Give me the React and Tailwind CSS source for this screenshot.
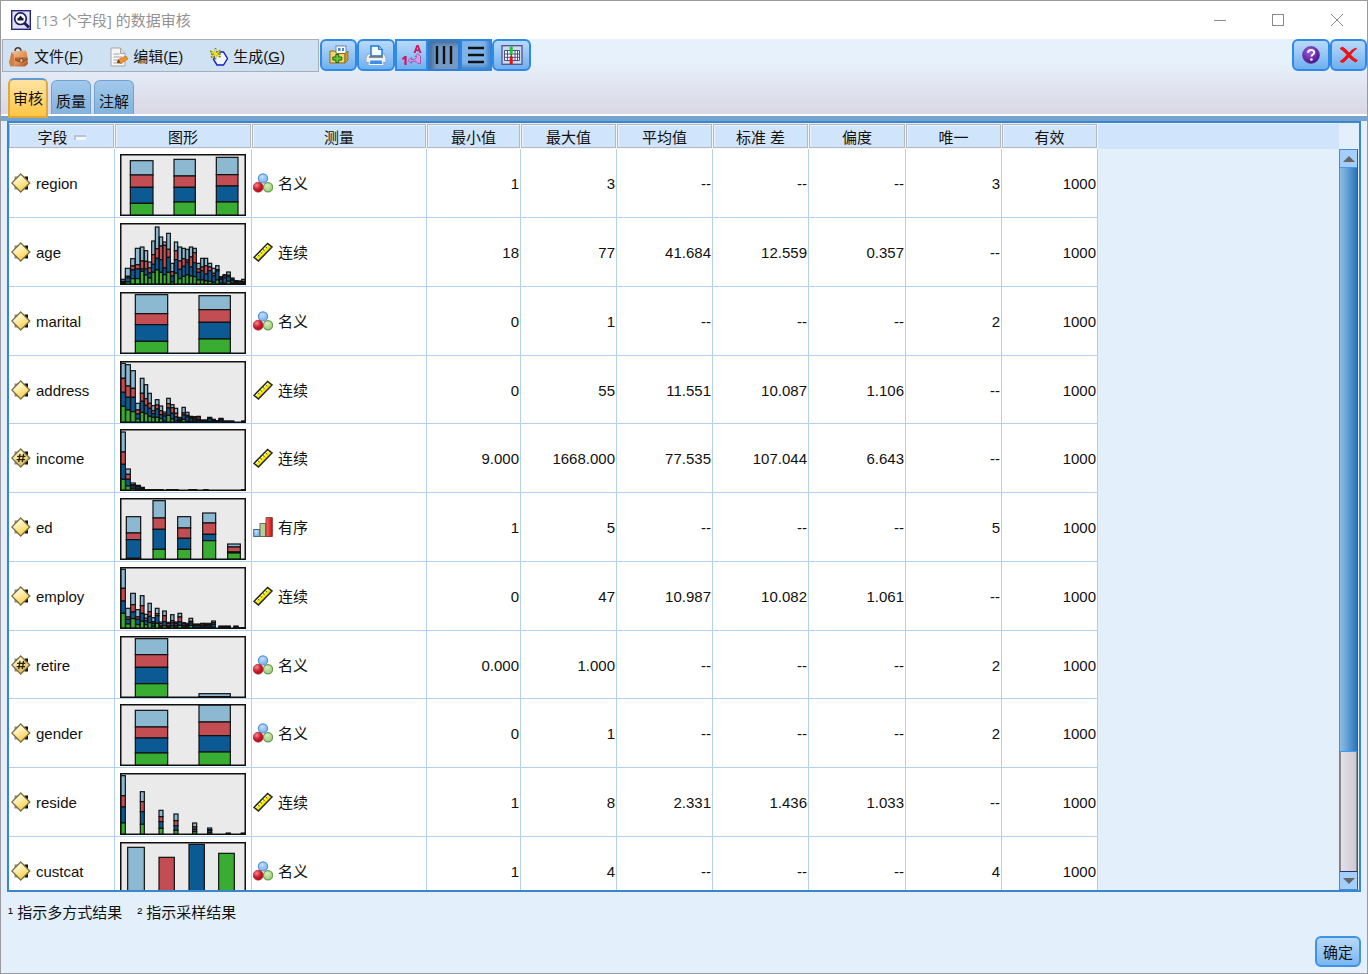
import React from "react";

const BLUE = "#8db8d2";
const RED = "#c24d52";
const NAVY = "#0c5a94";
const GREEN = "#39ad32";
const STACK = [BLUE, RED, NAVY, GREEN];

/* Each bar: [left, right, top, red start, navy start, green start].
   `origin` is the top-left corner of the plot, `size` is always 378 x 186. */
const CHARTS = {
  region: {
    origin: [360, 117],
    bars: [
      [391, 459, 137, 180, 217, 265],
      [522, 586, 133, 183, 217, 261],
      [649, 714, 127, 179, 213, 261],
    ],
  },
  age: {
    origin: [15, 15],
    bars: [
      [18, 31, 184, 190, 193, 196],
      [31, 46, 151, 175, 180, 192],
      [47, 60, 122, 144, 156, 182],
      [61, 75, 91, 140, 153, 182],
      [76, 87, 87, 129, 153, 160],
      [88, 98, 98, 130, 153, 171],
      [99, 109, 132, 150, 165, 180],
      [110, 120, 69, 110, 139, 163],
      [121, 132, 27, 92, 121, 156],
      [133, 143, 57, 84, 125, 163],
      [144, 154, 72, 82, 150, 170],
      [155, 166, 46, 94, 118, 163],
      [167, 177, 136, 161, 174, 192],
      [178, 188, 72, 98, 125, 166],
      [189, 200, 87, 129, 154, 182],
      [201, 211, 91, 122, 145, 175],
      [212, 222, 94, 126, 133, 171],
      [223, 233, 87, 117, 147, 174],
      [234, 244, 91, 104, 134, 176],
      [245, 256, 136, 153, 163, 186],
      [257, 267, 121, 147, 158, 186],
      [268, 278, 121, 143, 168, 189],
      [279, 290, 136, 147, 158, 190],
      [291, 301, 151, 166, 173, 193],
      [302, 312, 143, 155, 159, 186],
      [313, 323, 176, 180, 184, 196],
      [324, 335, 170, 174, 180, 196],
      [335, 346, 162, 172, 176, 190],
      [347, 357, 180, 184, 187, 196],
      [358, 368, 188, 190, 193, 196],
      [369, 380, 189, 190, 195, 197],
      [380, 391, 184, 190, 194, 197],
    ],
  },
  marital: {
    origin: [360, 20],
    bars: [
      [406, 503, 28, 85, 118, 168],
      [597, 691, 31, 73, 111, 161],
    ],
  },
  address: {
    origin: [15, 15],
    bars: [
      [17, 31, 22, 67, 109, 151],
      [32, 46, 26, 90, 124, 162],
      [47, 61, 44, 97, 124, 167],
      [62, 75, 142, 162, 174, 189],
      [76, 87, 67, 112, 136, 169],
      [88, 98, 86, 128, 148, 173],
      [99, 109, 112, 142, 157, 181],
      [110, 120, 149, 164, 173, 184],
      [121, 132, 131, 147, 159, 184],
      [133, 143, 150, 164, 176, 188],
      [144, 154, 168, 174, 180, 196],
      [155, 166, 127, 143, 156, 178],
      [167, 177, 146, 155, 172, 189],
      [178, 188, 157, 172, 183, 194],
      [189, 200, 184, 189, 192, 196],
      [201, 211, 154, 171, 177, 190],
      [212, 222, 169, 178, 183, 196],
      [223, 233, 181, 184, 188, 196],
      [234, 244, 182, 184, 189, 195],
      [245, 256, 181, 183, 190, 195],
      [257, 278, 192, 193, 194, 196],
      [278, 290, 184, 186, 188, 196],
      [291, 301, 190, 191, 193, 196],
      [302, 312, 194, 195, 196, 198],
      [312, 324, 187, 189, 191, 196],
      [325, 356, 195, 196, 197, 198],
      [380, 391, 195, 196, 197, 198],
    ],
  },
  income: {
    origin: [360, 433],
    bars: [
      [362, 376, 442, 502, 539, 584],
      [377, 391, 553, 569, 584, 604],
      [392, 406, 595, 600, 604, 611],
      [407, 421, 602, 604, 607, 613],
      [422, 433, 608, 610, 612, 614],
      [434, 489, 615, 616, 616, 617],
      [500, 534, 615, 616, 616, 617],
      [567, 590, 615, 616, 616, 617],
      [612, 624, 615, 616, 616, 617],
      [725, 737, 615, 616, 616, 617],
    ],
  },
  ed: {
    origin: [360, 25],
    bars: [
      [379, 422, 81, 130, 150, 206],
      [459, 496, 33, 85, 119, 179],
      [533, 572, 81, 115, 146, 179],
      [608, 647, 70, 100, 134, 153],
      [683, 721, 163, 172, 187, 190],
    ],
  },
  employ: {
    origin: [15, 15],
    bars: [
      [17, 31, 22, 79, 117, 154],
      [32, 46, 139, 165, 172, 186],
      [47, 61, 94, 128, 150, 170],
      [62, 75, 143, 165, 172, 188],
      [76, 87, 101, 131, 154, 178],
      [88, 98, 157, 169, 176, 188],
      [99, 109, 124, 149, 163, 182],
      [110, 120, 167, 179, 184, 193],
      [121, 132, 139, 155, 161, 184],
      [133, 143, 180, 185, 192, 196],
      [143, 154, 147, 161, 179, 191],
      [155, 166, 181, 185, 192, 196],
      [167, 177, 158, 176, 182, 192],
      [178, 188, 180, 184, 190, 196],
      [189, 200, 154, 165, 180, 190],
      [201, 211, 182, 186, 191, 196],
      [212, 222, 184, 188, 192, 196],
      [222, 233, 169, 178, 183, 190],
      [234, 256, 186, 188, 190, 196],
      [257, 267, 184, 186, 191, 196],
      [268, 288, 184, 188, 191, 196],
      [290, 301, 177, 182, 187, 196],
      [312, 346, 192, 194, 196, 198],
      [357, 369, 192, 194, 196, 198],
      [370, 391, 197, 198, 198, 199],
    ],
  },
  retire: {
    origin: [360, 437],
    bars: [
      [406, 503, 445, 493, 531, 580],
      [597, 691, 610, 619, 620, 621],
    ],
  },
  gender: {
    origin: [360, 28],
    bars: [
      [406, 503, 47, 97, 130, 175],
      [597, 691, 31, 82, 123, 172],
    ],
  },
  reside: {
    origin: [360, 235],
    bars: [
      [362, 376, 243, 303, 337, 385],
      [421, 433, 291, 321, 351, 389],
      [477, 489, 347, 366, 381, 401],
      [522, 534, 358, 378, 393, 407],
      [578, 590, 385, 397, 404, 411],
      [623, 635, 400, 405, 408, 414],
      [679, 691, 415, 417, 418, 419],
      [724, 737, 415, 417, 418, 419],
    ],
  },
  custcat: {
    origin: [360, 441],
    solid: [
      [383, 433, 457, BLUE],
      [477, 523, 487, RED],
      [567, 613, 448, NAVY],
      [656, 703, 475, GREEN],
    ],
  },
};

function Chart({ name }) {
  const { origin, bars = [], solid = [] } = CHARTS[name];
  const [ox, oy] = origin;
  const bottom = 184;
  return (
    <svg className="block h-[62px] w-[126px]" viewBox="0 0 378 186" role="img" aria-label={name}>
      <rect x="1.5" y="1.5" width="375" height="183" fill="#eaeaea" />
      <g stroke="#111" strokeWidth="3.6">
        {bars.map((b, i) =>
          STACK.map((fill, k) => {
            const top = b[k + 2] - oy;
            const end = k < 3 ? b[k + 3] - oy : bottom;
            return (
              <rect key={`${i}-${k}`} x={b[0] - ox} y={top} width={b[1] - b[0]} height={Math.max(0, end - top)} fill={fill} />
            );
          })
        )}
        {solid.map((b, i) => (
          <rect key={i} x={b[0] - ox} y={b[2] - oy} width={b[1] - b[0]} height={bottom - b[2] + oy} fill={b[3]} />
        ))}
        <rect x="1.5" y="1.5" width="375" height="183" fill="none" strokeWidth="6" />
      </g>
    </svg>
  );
}

const ROWS = [
  ["region", "nominal", "1", "3", "--", "--", "--", "3", "1000"],
  ["age", "scale", "18", "77", "41.684", "12.559", "0.357", "--", "1000"],
  ["marital", "nominal", "0", "1", "--", "--", "--", "2", "1000"],
  ["address", "scale", "0", "55", "11.551", "10.087", "1.106", "--", "1000"],
  ["income", "scale", "9.000", "1668.000", "77.535", "107.044", "6.643", "--", "1000"],
  ["ed", "ordinal", "1", "5", "--", "--", "--", "5", "1000"],
  ["employ", "scale", "0", "47", "10.987", "10.082", "1.061", "--", "1000"],
  ["retire", "nominal", "0.000", "1.000", "--", "--", "--", "2", "1000"],
  ["gender", "nominal", "0", "1", "--", "--", "--", "2", "1000"],
  ["reside", "scale", "1", "8", "2.331", "1.436", "1.033", "--", "1000"],
  ["custcat", "nominal", "1", "4", "--", "--", "--", "4", "1000"],
];
const REAL_FIELDS = ["income", "retire"];
const HEADERS = ["字段", "图形", "测量", "最小值", "最大值", "平均值", "标准 差", "偏度", "唯一", "有效"];
const MEASURE = { nominal: "名义", scale: "连续", ordinal: "有序" };

function FieldIcon({ real }) {
  return (
    <svg className="size-5 shrink-0" viewBox="0 0 20 20" aria-hidden="true">
      <path d="M3.500 3.500h4v3.500h-4zM3.500 13h4v3.500h-4z" fill="#8b8b8b" />
      <path d="M13.500 3.500h3.500v3.500h-3.500zM13.500 13h3.500v3.500h-3.500z" fill="#111" />
      <path d="M9.700 1 18.800 10 9.700 19 .8 10Z" fill={real ? "url(#realFill)" : "url(#fieldFill)"} stroke="#7d703f" strokeWidth="1.300" />
      {real && <path d="M9 5.800 7.700 14.200M12.600 5.800 11.300 14.200M6 8.400h8.400M5.600 11.600H14" stroke="#2a220b" strokeWidth="1.300" fill="none" />}
    </svg>
  );
}

function MeasureIcon({ kind }) {
  if (kind === "nominal")
    return (
      <svg className="size-5 shrink-0" viewBox="0 0 20 20" aria-hidden="true">
        <circle cx="10" cy="5.400" r="4.600" fill="url(#ballBlue)" stroke="#5b92cf" strokeWidth="1.200" />
        <circle cx="5.200" cy="14.200" r="5" fill="url(#ballRed)" stroke="#b01626" strokeWidth=".6" />
        <circle cx="15" cy="14.200" r="4.600" fill="url(#ballGreen)" stroke="#6d9a55" strokeWidth="1.200" />
      </svg>
    );
  if (kind === "scale")
    return (
      <svg className="size-5 shrink-0" viewBox="0 0 20 20" aria-hidden="true">
        <path d="M1 15.400 14.600 1.400 19 5 5.400 19Z" fill="#f7ee00" stroke="#222" strokeWidth="1.500" />
        <path d="M2.600 15.400 14.800 3" stroke="#fff" strokeWidth="1" />
        <path d="m4.600 12.600 1.800 1.600M7.200 9.900 9 11.500M9.800 7.200l1.800 1.600M12.400 4.600l1.800 1.600" stroke="#5c5300" strokeWidth="1" />
        <path d="M5.400 17.600 17.800 5" stroke="#a9a000" strokeWidth=".8" />
      </svg>
    );
  return (
    <svg className="size-5 shrink-0" viewBox="0 0 20 20" aria-hidden="true">
      <rect x=".7" y="12.500" width="6" height="7" fill="url(#ballBlue)" stroke="#45678c" />
      <rect x="7" y="6.500" width="5.600" height="13" fill="#b4cf93" stroke="#66705d" />
      <rect x="13" y=".7" width="6.300" height="18.800" fill="url(#barRed)" stroke="#7d2020" strokeWidth=".8" />
    </svg>
  );
}

function Defs() {
  return (
    <svg className="absolute size-0" aria-hidden="true">
      <defs>
        <linearGradient id="fieldFill" x1=".3" y1=".1" x2=".7" y2=".9">
          <stop offset=".15" stopColor="#fff8cf" />
          <stop offset="1" stopColor="#fbcf4a" />
        </linearGradient>
        <linearGradient id="realFill" x1=".3" y1=".1" x2=".7" y2=".9">
          <stop offset=".15" stopColor="#fdf3c4" />
          <stop offset="1" stopColor="#dcb94c" />
        </linearGradient>
        <radialGradient id="ballBlue" cx=".4" cy=".3" r=".8">
          <stop offset="0" stopColor="#c3e0ff" />
          <stop offset="1" stopColor="#6ba8ea" />
        </radialGradient>
        <radialGradient id="ballRed" cx=".35" cy=".3" r=".8">
          <stop offset="0" stopColor="#f08a90" />
          <stop offset=".5" stopColor="#cc1c2c" />
          <stop offset="1" stopColor="#9c0d1c" />
        </radialGradient>
        <radialGradient id="ballGreen" cx=".4" cy=".3" r=".8">
          <stop offset="0" stopColor="#d6edc0" />
          <stop offset="1" stopColor="#94c66c" />
        </radialGradient>
        <radialGradient id="ballPurple" cx=".4" cy=".3" r=".8">
          <stop offset="0" stopColor="#a65ae0" />
          <stop offset="1" stopColor="#3c0785" />
        </radialGradient>
        <linearGradient id="barRed" x1="0" y1="0" x2="1" y2="0">
          <stop offset="0" stopColor="#ff6a6a" />
          <stop offset="1" stopColor="#c90c0c" />
        </linearGradient>
        <linearGradient id="bag" x1="0" y1="0" x2="1" y2="1">
          <stop offset="0" stopColor="#f8c79c" />
          <stop offset=".6" stopColor="#dd8f58" />
          <stop offset="1" stopColor="#a9501c" />
        </linearGradient>
      </defs>
    </svg>
  );
}

function MenuItem({ icon, label, mnemonic }) {
  return (
    <button type="button" className="flex items-center gap-[5px]">
      {icon}
      <span className="whitespace-nowrap">
        {label}(<u>{mnemonic}</u>)
      </span>
    </button>
  );
}

const BagIcon = (
  <svg className="size-5" viewBox="0 0 20 20" aria-hidden="true">
    <path d="M6 4Q6 .8 9 .8q3 0 3 3.200" fill="none" stroke="#4b4038" strokeWidth="1.400" />
    <path d="M3 4.500 16.500 3.500 18 6l1 11-3 2.500H1.500L0 16Z" fill="url(#bag)" />
    <path d="M2.500 5 0 15.500 1.500 19.500 5 18V8Z" fill="#cf8049" />
    <path d="M6 10.500h12.500l.2 1.500q-6 4.500-12.700 1z" fill="#b9652f" />
    <path d="M6 13q6.500 3.500 12.700-1" fill="none" stroke="#7d3510" strokeWidth=".8" />
    <rect x="11" y="12" width="2.800" height="3" fill="#f6dcc0" stroke="#6b3010" strokeWidth=".6" />
  </svg>
);
const EditIcon = (
  <svg className="h-5 w-[18px]" viewBox="0 0 18 20" aria-hidden="true">
    <path d="M1 1h9.500L15 6.500V19H1Z" fill="#f6f6f6" stroke="#a5a5a5" />
    <path d="M10.500 1v5.500H15" fill="#dedede" stroke="#a5a5a5" />
    <path d="M3.500 7h6M3.500 10h9M3.500 13h5M3.500 16h9" stroke="#a5a5a5" />
    <path d="m7 15.500 1.500-3L16 9l2 3-7 4.500z" fill="#f59324" stroke="#b4611a" strokeWidth=".6" />
    <path d="m7 15.500 1.500-3 2 3.300z" fill="#4d3a28" />
  </svg>
);
const GenerateIcon = (
  <svg className="size-[18px]" viewBox="0 0 18 18" aria-hidden="true">
    <path d="M7 4h6.500l4 6.500-4 6.500H7l-3.500-5.500Z" fill="#eef5ff" stroke="#1d1db8" strokeWidth="1.400" />
    <path d="M5.500 0v11.500M0 3l10.500 6M10.500 2.500 1 9.500M1 6h10" stroke="#7b7b15" strokeWidth="1.600" />
    <path d="M5.500 1v9M1.500 4l8 4M9.500 3.500 2 8.500" stroke="#f0e520" strokeWidth="1.400" />
  </svg>
);

const toolBase = "flex h-8 items-center justify-center border-2 border-[#2f8ae6] bg-linear-to-b from-[#b8d9fa] to-[#6fb0ef]";

function ToolButton({ label, className, children }) {
  return (
    <button type="button" aria-label={label} className={`${toolBase} ${className}`}>
      {children}
    </button>
  );
}

function Toolbar() {
  return (
    <div className="flex h-8 items-start pl-px">
      <nav className="flex h-[33px] w-[317px] items-center border border-[#a9adb6] bg-[#cfe2f4] pt-[3px] pl-1.5">
        <div className="flex gap-[27px]">
          <MenuItem icon={BagIcon} label="文件" mnemonic="F" />
          <MenuItem icon={EditIcon} label="编辑" mnemonic="E" />
          <MenuItem icon={GenerateIcon} label="生成" mnemonic="G" />
        </div>
      </nav>
      <div className="ml-px flex">
        <ToolButton label="打开" className="w-[37px] rounded-md">
          <svg className="size-5" viewBox="0 0 20 20" aria-hidden="true">
            <rect x="7" y="1" width="10" height="12" fill="#f7faff" stroke="#6f88a5" />
            <path d="M9 3h2.500v3H9zM13 3h2v3h-2zM9 8h2.500v2H9zM13 8h2v2h-2z" fill="#4a86c8" />
            <path d="M1 6h5l1.500 2.500H16V18H1Z" fill="#f2d271" stroke="#8f6a14" />
            <path d="M16 8.500 19 6v9l-3 3Z" fill="#c99b35" stroke="#8f6a14" strokeWidth=".8" />
            <path d="M6.800 9.500h3v2.500h3v3h-3v2.500h-3V15h-3v-3h3Z" fill="#62c43a" stroke="#1f6a14" />
          </svg>
        </ToolButton>
        <ToolButton label="打印" className="w-[38px] rounded-md">
          <svg className="size-5" viewBox="0 0 20 20" aria-hidden="true">
            <path d="M1.500 9h17L20 13v4.500H0V13Z" fill="#efefef" stroke="#8f959c" strokeWidth=".8" />
            <path d="M5 1h7.500L16 4.500V11H5Z" fill="#f4faff" stroke="#1f78d4" strokeWidth="1.500" />
            <path d="M12.500 1v3.500H16" fill="#8cc0f4" stroke="#1f78d4" />
            <path d="M3 12h14" stroke="#6d7278" strokeWidth="1.500" />
            <path d="M4 15h12l1 4.500H3Z" fill="#3f8fe2" stroke="#f4f9ff" />
          </svg>
        </ToolButton>
        <ToolButton label="值标签" className="w-[33px]">
          <svg className="size-5" viewBox="0 0 20 20" aria-hidden="true">
            <path d="m11.500 8 3-8h2l3 8h-2.100l-.5-1.700h-2.800L13.600 8ZM14.700 4.600h1.700l-.85-2.600Z" fill="#d8125c" />
            <path d="M.3 13 2.600 11h2v9H2.400v-6L.3 15Z" fill="#d8125c" />
            <path d="m6 15.500 3.500-3v2h3l2-2v-1H13l3-3 2.500 3V18.500H16l-2-2.200H9.500v2Z" fill="#d79be0" stroke="#a04fae" strokeWidth=".9" />
          </svg>
        </ToolButton>
        <button type="button" aria-label="列" aria-pressed="true" className="flex h-8 w-8 items-center justify-center border-2 border-[#2f7fd0] bg-[#7399c4] shadow-[inset_3px_3px_4px_#456f9f]">
          <svg className="size-[18px]" viewBox="0 0 18 18" aria-hidden="true">
            <path d="M2 0v18M9 0v18M16 0v18" stroke="#111" strokeWidth="2.400" />
          </svg>
        </button>
        <button type="button" aria-label="行" aria-pressed="false" className="flex h-8 w-8 items-center justify-center border-2 border-[#2f86e0] bg-[#7fb4ea] shadow-[inset_-3px_-3px_4px_#4482c6]">
          <svg className="size-[18px]" viewBox="0 0 18 18" aria-hidden="true">
            <path d="M1 2h16M1 9h16M1 16h16" stroke="#111" strokeWidth="2.400" />
          </svg>
        </button>
        <ToolButton label="表格" className="w-[39px] rounded-md">
          <svg className="h-5 w-[22px]" viewBox="0 0 22 20" aria-hidden="true">
            <rect x="1" y=".7" width="20" height="18.600" fill="#c9dbf3" stroke="#55508c" strokeWidth="1.300" />
            <path d="M3.500 5.500h15v10h-15ZM3.500 9h15M3.500 12.300h15M6.500 5.500v10M14 5.500v10M16.500 5.500v10" fill="#fff" stroke="#46508f" strokeWidth="1" />
            <path d="M8.700 1.500h3v8h-3z" fill="#1fc437" />
            <path d="M8.700 11.500h3v7.500h-3z" fill="#e11313" />
            <path d="M10.200 9v3" stroke="#222" />
          </svg>
        </ToolButton>
      </div>
      <div className="ml-auto flex">
        <ToolButton label="帮助" className="w-[38px] rounded-md">
          <svg className="size-[18px]" viewBox="0 0 18 18" aria-hidden="true">
            <circle cx="9" cy="9" r="8.500" fill="url(#ballPurple)" stroke="#5a3a80" strokeWidth=".6" />
            <path d="M6 6.800Q6.200 4 9.200 4q3 0 3 2.500 0 1.500-1.700 2.400-1 .6-1 1.600" fill="none" stroke="#fff" strokeWidth="2" />
            <circle cx="9.400" cy="13.500" r="1.300" fill="#fff" />
          </svg>
        </ToolButton>
        <ToolButton label="关闭" className="w-[37px] rounded-md">
          <svg className="size-[18px]" viewBox="0 0 18 18" aria-hidden="true">
            <path
              d="M0 2.500 2.500 1Q6 3 9 7q3.500-4 7-5l.5.800Q13 5 10.500 8.800 13 12 17.500 14.500L15.500 16Q11.500 14 8.800 11 6 14.500 3 16.500L0 15.500Q4.500 12.500 7 8.700 4 5 0 2.500Z"
              fill="#ee1212"
              stroke="#ee1212"
              strokeWidth=".8"
            />
          </svg>
        </ToolButton>
      </div>
    </div>
  );
}

const thCell =
  "flex h-6 items-center justify-center border border-[#b4b8bf] bg-[#d0e4fc] pt-[3px] font-normal shadow-[inset_1px_1px_0_#e9f2fd]";
const tdBase = "border-r border-b border-[#b3d1ee] bg-white p-0";

function AuditTable() {
  return (
    <table className="w-full table-fixed border-separate border-spacing-0 text-[15px] leading-5">
      <colgroup>
        <col className="w-[106px]" />
        <col className="w-[137px]" />
        <col className="w-[175px]" />
        <col className="w-[94px]" />
        <col className="w-24" />
        <col className="w-24" />
        <col className="w-24" />
        <col className="w-[97px]" />
        <col className="w-24" />
        <col className="w-24" />
        <col />
      </colgroup>
      <thead>
        <tr>
          {HEADERS.map((h, i) => (
            <th key={h} scope="col" className="bg-[#f4f7fb] p-0 pr-px pb-px">
              <div className={thCell}>
                {h}
                {i === 0 && <span className="ml-1.5 h-[5px] w-3 border-t-2 border-l-2 border-t-[#b9c4d0] border-l-[#b9c4d0] bg-[#f0f6fd]" />}
              </div>
            </th>
          ))}
          <td className="bg-[#d0e4fc] p-0" />
        </tr>
      </thead>
      <tbody>
        {ROWS.map(([name, kind, ...values]) => (
          <tr key={name} className="h-[69px] nth-[4n]:h-[68px]">
            <td className={tdBase}>
              <div className="flex items-center gap-[5px] pl-0.5">
                <FieldIcon real={REAL_FIELDS.includes(name)} />
                <span className="pt-0.5">{name}</span>
              </div>
            </td>
            <td className={`${tdBase} pt-[5px] pl-[5px] align-top`}>
              <Chart name={name} />
            </td>
            <td className={tdBase}>
              <div className="flex items-center gap-[5px] pl-px">
                <MeasureIcon kind={kind} />
                <span className="pt-0.5">{MEASURE[kind]}</span>
              </div>
            </td>
            {values.map((v, i) => (
              <td key={i} className={`${tdBase} pt-0.5 pr-px text-right`}>
                {v}
              </td>
            ))}
            <td className="p-0" />
          </tr>
        ))}
      </tbody>
    </table>
  );
}

function Scrollbar() {
  return (
    <div className="mt-[26px] flex w-[19px] shrink-0 flex-col border border-[#3d8fe0] border-r-[#1f5fa5]">
      <button type="button" aria-label="向上滚动" className="flex h-[17px] items-center justify-center bg-[#a5cefa]">
        <svg className="h-1.5 w-3" viewBox="0 0 12 6" aria-hidden="true">
          <path d="M0 6 6 0l6 6Z" fill="#666" />
        </svg>
      </button>
      <div className="grow-[83] border-y border-[#3d9bf5] bg-linear-to-r from-[#8dbde6] via-[#5c9bd2] to-[#2b73b8]" />
      <div className="grow-[17] border-x border-[#8a8a8a] bg-linear-to-r from-[#e3e0ea] to-[#cdcad6]" />
      <button type="button" aria-label="向下滚动" className="flex h-[18px] items-center justify-center border-t border-[#20386b] bg-[#a5cefa]">
        <svg className="h-1.5 w-3" viewBox="0 0 12 6" aria-hidden="true">
          <path d="M0 0h12L6 6Z" fill="#666" />
        </svg>
      </button>
    </div>
  );
}

const idleTab = "h-[34px] w-10 rounded-t-md border border-b-0 border-[#6ea2d3] bg-linear-to-b from-[#a3c9ec] to-[#83b2dc] pt-2";

export default function App() {
  return (
    <div className="flex h-screen flex-col overflow-hidden border border-[#9a9a9e] bg-[#e3f0fc] font-['Liberation_Sans','Noto_Sans_CJK_SC',sans-serif] text-[15px] leading-5 text-[#111]">
      <Defs />
      <header className="flex h-[38px] shrink-0 items-center bg-white pl-2.5">
        <svg className="size-5" viewBox="0 0 20 20" aria-hidden="true">
          <rect x=".7" y=".7" width="18.600" height="18.600" fill="#dfe2f3" stroke="#26267c" strokeWidth="1.400" />
          <circle cx="9.500" cy="8.700" r="5.800" fill="#fff" stroke="#1d1d66" strokeWidth="1.700" />
          <path d="m13.500 13 4.500 4.500" stroke="#1d1d66" strokeWidth="3" />
          <path d="M9.500 5.500 11.500 8h1v2.500h-6V8h1Z" fill="#16163f" />
        </svg>
        <h1 className="ml-[5px] font-['Open_Sans','Noto_Sans_CJK_SC',sans-serif] text-[15px] text-[#929292]">[13 个字段] 的数据审核</h1>
        <div className="ml-auto flex h-full">
          <button type="button" aria-label="最小化" className="flex w-[58px] items-center justify-center">
            <span className="h-px w-3 bg-[#8a8a8a]" />
          </button>
          <button type="button" aria-label="最大化" className="flex w-[58px] items-center justify-center">
            <span className="size-3 border border-[#8a8a8a]" />
          </button>
          <button type="button" aria-label="关闭窗口" className="flex w-[60px] items-center justify-center">
            <svg className="size-3" viewBox="0 0 12 12" aria-hidden="true">
              <path d="m0 0 12 12M12 0 0 12" stroke="#8a8a8a" />
            </svg>
          </button>
        </div>
      </header>

      <div className="shrink-0 border-b-2 border-white bg-linear-to-b from-[#e6f1fc] from-30% to-[#dad7e4]">
        <Toolbar />
        <div role="tablist" className="flex h-[43px] items-end gap-[3px] pl-[7px]">
          <button type="button" role="tab" aria-selected="true" className="relative -mb-1 h-10 w-10 rounded-t-md border-2 border-[#e0a93c] border-t-[#5f9bd0] bg-linear-to-b from-[#fde3a0] to-[#ffc640] pt-0.5">
            审核
          </button>
          <button type="button" role="tab" aria-selected="false" className={idleTab}>质量</button>
          <button type="button" role="tab" aria-selected="false" className={idleTab}>注解</button>
        </div>
      </div>
      <div className="h-[5px] shrink-0 bg-[#74a3d2]" />

      <main className="mx-1.5 flex min-h-0 flex-1 border-2 border-[#3a85cb]">
        <div className="min-w-0 flex-1 overflow-hidden pt-px">
          <AuditTable />
        </div>
        <Scrollbar />
        <div className="w-px shrink-0" />
      </main>

      <footer className="shrink-0 px-1.5">
        <p className="flex gap-[15px] pt-[11px] pl-px">
          <span>¹ 指示多方式结果</span>
          <span>² 指示采样结果</span>
        </p>
        <div className="mt-[13px] mb-1.5 flex justify-end">
          <button type="button" className="h-[31px] w-[46px] rounded-md border-2 border-[#3f93e4] bg-linear-to-b from-[#b8d9fa] to-[#7ab6f0] pt-0.5">
            确定
          </button>
        </div>
      </footer>
    </div>
  );
}
